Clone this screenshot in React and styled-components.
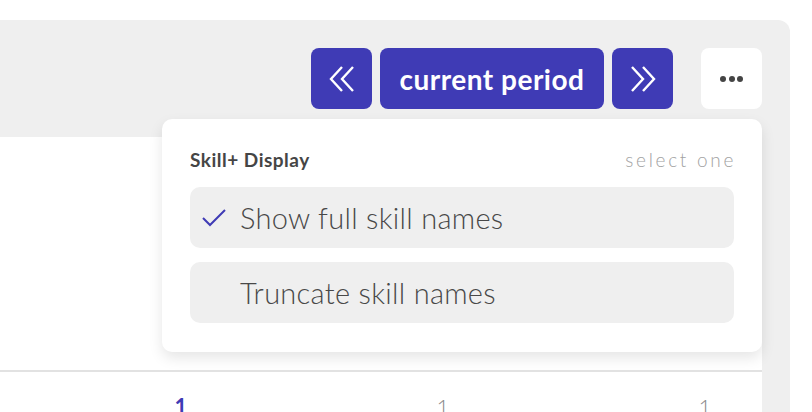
import React from 'react';
import styled, { createGlobalStyle } from 'styled-components';

const GlobalStyle = createGlobalStyle`
  body {
    margin: 0;
    background: #ffffff;
    font-family: 'Lato', 'Open Sans', sans-serif;
  }
`;

const Page = styled.section`
  height: 412px;
  padding-top: 20px;
  box-sizing: border-box;
  overflow: hidden;
`;

const Panel = styled.div`
  position: relative;
  width: 790px;
  height: 392px;
  background: #efefef;
  border-top-right-radius: 12px;
  padding-right: 28px;
  box-sizing: border-box;
  display: flex;
  flex-direction: column;
  overflow: hidden;
`;

const Toolbar = styled.div`
  flex-shrink: 0;
  height: 117px;
  display: flex;
  justify-content: flex-end;
  align-items: flex-start;
  padding-top: 28px;
  box-sizing: border-box;
  gap: 8px;
`;

const NavButton = styled.button`
  height: 61px;
  width: ${p => (p.$wide ? '224px' : '61px')};
  padding: 0;
  border: none;
  border-radius: 8px;
  background: #3f3bb5;
  color: #ffffff;
  font-family: 'Lato', sans-serif;
  font-weight: 700;
  font-size: 28px;
  letter-spacing: 0.5px;
  display: flex;
  align-items: center;
  justify-content: center;
  cursor: pointer;
`;

const MoreButton = styled.button`
  width: 61px;
  height: 61px;
  margin-left: 20px;
  border: none;
  border-radius: 8px;
  background: #ffffff;
  display: flex;
  align-items: center;
  justify-content: center;
  gap: 2.5px;
  cursor: pointer;
`;

const Dot = styled.span`
  width: 6px;
  height: 6px;
  border-radius: 50%;
  background: #444;
`;

const Menu = styled.div`
  position: absolute;
  top: 99px;
  right: 28px;
  width: 600px;
  background: #ffffff;
  border-radius: 10px;
  box-shadow: 0 6px 14px rgba(0, 0, 0, 0.1);
  padding: 28px 28px 29px;
  box-sizing: border-box;
  z-index: 2;
`;

const MenuHead = styled.div`
  display: flex;
  justify-content: space-between;
  align-items: center;
  height: 24px;
  margin-bottom: 16px;
`;

const MenuTitle = styled.span`
  font-weight: 700;
  font-size: 19px;
  letter-spacing: 0.5px;
  color: #454545;
`;

const MenuHint = styled.span`
  font-weight: 300;
  font-size: 19px;
  letter-spacing: 2.7px;
  color: #a2a2a2;
  margin-right: -2px;
`;

const Options = styled.div`
  display: flex;
  flex-direction: column;
  gap: 14px;
`;

const Option = styled.div`
  height: 61px;
  border-radius: 10px;
  background: #efefef;
  display: flex;
  align-items: center;
  padding-left: 12px;
  font-weight: 300;
  font-size: 29px;
  letter-spacing: 0.3px;
  color: #484848;
`;

const CheckSlot = styled.span`
  width: 38px;
  display: flex;
  align-items: center;
`;

const Card = styled.div`
  flex: 1;
  background: #ffffff;
  border-top-right-radius: 10px;
  display: flex;
  flex-direction: column;
`;

const CardHead = styled.div`
  flex-shrink: 0;
  height: 233px;
  border-bottom: 2px solid #e2e2e2;
`;

const Row = styled.div`
  display: grid;
  grid-template-columns: 50px repeat(3, 262px);
  padding-top: 21px;
`;

const Cell = styled.span`
  text-align: center;
  font-size: 22px;
  font-weight: ${p => (p.$active ? 700 : 300)};
  color: ${p => (p.$active ? '#3f3bb5' : '#888')};
`;

const Chevrons = ({ dir }) => (
  <svg width="26" height="26" viewBox="0 0 26 26" fill="none" stroke="#fff" strokeWidth="2.4">
    {dir === 'left' ? (
      <>
        <polyline points="13,1 2,13 13,25" />
        <polyline points="24,1 13,13 24,25" />
      </>
    ) : (
      <>
        <polyline points="2,1 13,13 2,25" />
        <polyline points="13,1 24,13 13,25" />
      </>
    )}
  </svg>
);

const Check = () => (
  <svg width="24" height="18" viewBox="0 0 24 18" fill="none" stroke="#3f3bb5" strokeWidth="2">
    <polyline points="1,9 8,16 23,1" />
  </svg>
);

const options = [
  { label: 'Show full skill names', selected: true },
  { label: 'Truncate skill names', selected: false }
];

const App = () => (
  <>
    <GlobalStyle />
    <Page>
      <Panel>
        <Toolbar>
          <NavButton>
            <Chevrons dir="left" />
          </NavButton>
          <NavButton $wide>current period</NavButton>
          <NavButton>
            <Chevrons dir="right" />
          </NavButton>
          <MoreButton>
            <Dot />
            <Dot />
            <Dot />
          </MoreButton>
        </Toolbar>

        <Menu>
          <MenuHead>
            <MenuTitle>Skill+ Display</MenuTitle>
            <MenuHint>select one</MenuHint>
          </MenuHead>
          <Options>
            {options.map(o => (
              <Option key={o.label}>
                <CheckSlot>{o.selected ? <Check /> : null}</CheckSlot>
                {o.label}
              </Option>
            ))}
          </Options>
        </Menu>

        <Card>
          <CardHead />
          <Row>
            <span />
            <Cell $active>1</Cell>
            <Cell>1</Cell>
            <Cell>1</Cell>
          </Row>
        </Card>
      </Panel>
    </Page>
  </>
);

export default App;
